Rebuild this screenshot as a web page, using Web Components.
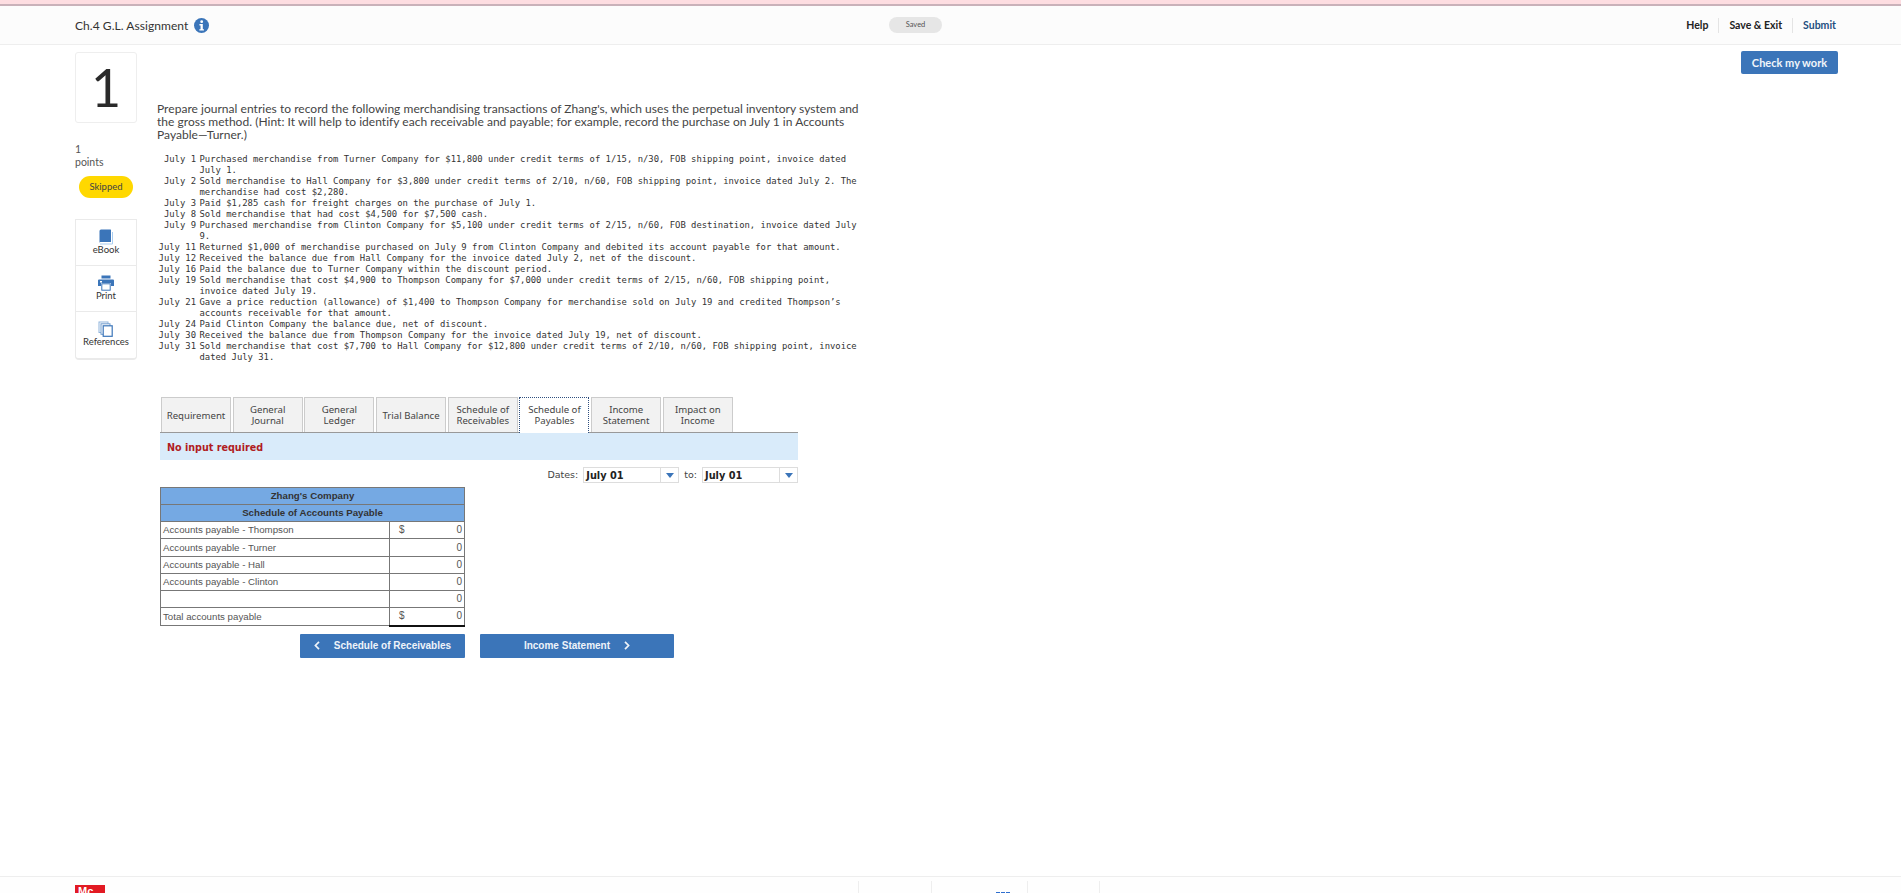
<!DOCTYPE html>
<html lang="en">
<head>
<meta charset="utf-8">
<title>Ch.4 G.L. Assignment</title>
<style>
  html, body { margin: 0; padding: 0; background: #fff; }
  body {
    height: 893px;
    overflow: hidden;
    display: flex;
    flex-direction: column;
    font-family: "Lato", "Liberation Sans", sans-serif;
    color: #333;
  }
</style>
</head>
<body>
<top-strip></top-strip>
<app-header title-text="Ch.4 G.L. Assignment"></app-header>
<main-area>
  <question-side slot="side"></question-side>
  <question-body slot="body">
    <journal-list></journal-list>
    <tab-bar></tab-bar>
    <notice-bar>No input required</notice-bar>
    <date-row></date-row>
    <payable-table></payable-table>
    <nav-buttons></nav-buttons>
  </question-body>
  <check-button slot="action">Check my work</check-button>
</main-area>
<app-footer></app-footer>

<script>
class TopStrip extends HTMLElement {
  connectedCallback() {
    this.attachShadow({ mode: 'open' });
    this.shadowRoot.innerHTML = `
      <style>
        :host { display: block; flex: none; height: 4px; background: #fddde1; border-bottom: 2px solid #c9b1b9; }
      </style>
    `;
  }
}

class AppHeader extends HTMLElement {
  connectedCallback() {
    this.attachShadow({ mode: 'open' });
    this.shadowRoot.innerHTML = `
      <style>
        :host {
          display: grid;
          grid-template-columns: 814px 53px 1fr;
          align-items: center;
          flex: none;
          height: 38px;
          padding: 0 65px 0 75px;
          background: #fcfcfc;
          border-bottom: 1px solid #eee;
          font-family: "Lato", sans-serif;
        }
        .title { display: flex; align-items: center; gap: 6px; font-size: 12px; letter-spacing: .05px; color: #333; }
        .title svg { display: block; width: 15px; height: 15px; }
        .saved {
          width: 53px; height: 16px; border-radius: 8px;
          background: #e6e6e6; color: #555;
          font-size: 7.5px; line-height: 16px; text-align: center;
        }
        .links { display: flex; justify-content: flex-end; align-items: center; font-size: 10.5px; font-weight: 700; color: #222; }
        .links span { padding: 0 10px; height: 15px; line-height: 15px; border-left: 1px solid #e4e4e4; }
        .links span:first-child { border-left: 0; }
        .links span:last-child { padding-right: 0; color: #1f4f7f; }
      </style>
      <div class="title">
        <span>${this.getAttribute('title-text')}</span>
        <svg viewBox="0 0 16 16">
          <circle cx="8" cy="8" r="8" fill="#3b75b9"/>
          <circle cx="8.2" cy="3.9" r="1.5" fill="#fff"/>
          <path d="M5.8 6.5h3.6v5.4h1.2v1.5H5.7v-1.5h1.3V8H5.8z" fill="#fff"/>
        </svg>
      </div>
      <div class="saved">Saved</div>
      <div class="links"><span>Help</span><span>Save &amp; Exit</span><span>Submit</span></div>
    `;
  }
}

class MainArea extends HTMLElement {
  connectedCallback() {
    this.attachShadow({ mode: 'open' });
    this.shadowRoot.innerHTML = `
      <style>
        :host {
          display: grid;
          grid-template-columns: 62px 1fr auto;
          column-gap: 20px;
          align-items: start;
          flex: 1;
          padding: 0 63px 0 75px;
        }
        ::slotted([slot=action]) { margin-top: 6px; }
      </style>
      <slot name="side"></slot>
      <slot name="body"></slot>
      <slot name="action"></slot>
    `;
  }
}

class QuestionSide extends HTMLElement {
  connectedCallback() {
    this.attachShadow({ mode: 'open' });
    this.shadowRoot.innerHTML = `
      <style>
        :host { display: block; padding-top: 7px; font-family: "Lato", sans-serif; color: #555; }
        .num {
          box-sizing: border-box; height: 71px;
          border: 1px solid #eee; border-radius: 3px;
          font-size: 52px; line-height: 68px; text-align: center; color: #2a2a2a;
        }
        .pts { margin-top: 20px; font-size: 10.5px; line-height: 13px; }
        .pill {
          width: 54px; height: 22px; margin: 7px 0 0 4px; border-radius: 11px;
          background: #ffd800; color: #444; font-size: 9.5px; line-height: 22px; text-align: center;
        }
        .tools {
          box-sizing: border-box; width: 62px; margin-top: 21px;
          border: 1px solid #eaeaea; border-bottom-width: 2px; border-radius: 0 0 4px 4px;
        }
        .tool {
          display: flex; flex-direction: column; align-items: center;
          height: 46px; box-sizing: border-box; padding-top: 9px;
          border-bottom: 1px solid #eaeaea;
          font-size: 9.5px; line-height: 10px; color: #333;
        }
        .tool:last-child { border-bottom: 0; height: 46px; }
        .tool svg { display: block; width: 16px; height: 16px; }
      </style>
      <div class="num">1</div>
      <div class="pts">1<br>points</div>
      <div class="pill">Skipped</div>
      <div class="tools">
        <div class="tool">
          <svg viewBox="0 0 16 16">
            <path d="M2 15h12.5V3" fill="none" stroke="#a9cdf0" stroke-width="1"/>
            <path d="M3 .5h9.5a.5.5 0 0 1 .5.5v12H3a1.2 1.2 0 0 0-1.5 1V2A1.5 1.5 0 0 1 3 .5z" fill="#3b75b9"/>
          </svg>
          eBook
        </div>
        <div class="tool">
          <svg viewBox="0 0 16 16">
            <rect x="3.5" y="0.5" width="9" height="3" fill="#3b75b9"/>
            <path d="M1 4.5h14a1 1 0 0 1 1 1V11h-3V8H3v3H0V5.5a1 1 0 0 1 1-1z" fill="#3b75b9"/>
            <rect x="2" y="6" width="2" height="1.5" fill="#fff"/>
            <rect x="3.8" y="8.8" width="8.4" height="6.4" fill="#fff" stroke="#3b75b9" stroke-width="1"/>
          </svg>
          Print
        </div>
        <div class="tool">
          <svg viewBox="0 0 16 16">
            <rect x="1" y="1" width="9" height="10.5" fill="#fff" stroke="#8fb4dc" stroke-width="1"/>
            <rect x="3" y="2.8" width="9" height="10.5" fill="#fff" stroke="#6f9bcd" stroke-width="1"/>
            <rect x="5.2" y="4.8" width="9" height="10.5" fill="#fff" stroke="#3b75b9" stroke-width="1.2"/>
          </svg>
          References
        </div>
      </div>
    `;
  }
}

class QuestionBody extends HTMLElement {
  connectedCallback() {
    this.attachShadow({ mode: 'open' });
    this.shadowRoot.innerHTML = `
      <style>
        :host { display: block; padding-top: 57px; }
        p {
          margin: 0 0 13px; width: 705px;
          font: 12px/13px "Lato", sans-serif; letter-spacing: .03px; color: #444;
        }
      </style>
      <p>Prepare journal entries to record the following merchandising transactions of Zhang's, which uses the perpetual inventory system and the gross method. (Hint: It will help to identify each receivable and payable; for example, record the purchase on July 1 in Accounts Payable—Turner.)</p>
      <slot></slot>
    `;
  }
}

const JOURNAL = [
  ['July 1', 'Purchased merchandise from Turner Company for $11,800 under credit terms of 1/15, n/30, FOB shipping point, invoice dated July 1.'],
  ['July 2', 'Sold merchandise to Hall Company for $3,800 under credit terms of 2/10, n/60, FOB shipping point, invoice dated July 2. The merchandise had cost $2,280.'],
  ['July 3', 'Paid $1,285 cash for freight charges on the purchase of July 1.'],
  ['July 8', 'Sold merchandise that had cost $4,500 for $7,500 cash.'],
  ['July 9', 'Purchased merchandise from Clinton Company for $5,100 under credit terms of 2/15, n/60, FOB destination, invoice dated July 9.'],
  ['July 11', 'Returned $1,000 of merchandise purchased on July 9 from Clinton Company and debited its account payable for that amount.'],
  ['July 12', 'Received the balance due from Hall Company for the invoice dated July 2, net of the discount.'],
  ['July 16', 'Paid the balance due to Turner Company within the discount period.'],
  ['July 19', 'Sold merchandise that cost $4,900 to Thompson Company for $7,000 under credit terms of 2/15, n/60, FOB shipping point, invoice dated July 19.'],
  ['July 21', 'Gave a price reduction (allowance) of $1,400 to Thompson Company for merchandise sold on July 19 and credited Thompson’s accounts receivable for that amount.'],
  ['July 24', 'Paid Clinton Company the balance due, net of discount.'],
  ['July 30', 'Received the balance due from Thompson Company for the invoice dated July 19, net of discount.'],
  ['July 31', 'Sold merchandise that cost $7,700 to Hall Company for $12,800 under credit terms of 2/10, n/60, FOB shipping point, invoice dated July 31.']
];

class JournalList extends HTMLElement {
  connectedCallback() {
    this.attachShadow({ mode: 'open' });
    const rows = JOURNAL.map(r => `<div class="d">${r[0]}</div><div class="t">${r[1]}</div>`).join('');
    this.shadowRoot.innerHTML = `
      <style>
        :host {
          display: grid;
          grid-template-columns: 38px 665px;
          column-gap: 3.5px;
          padding-left: 1px;
          font: 8.9px/11px "DejaVu Sans Mono", "Liberation Mono", monospace;
          color: #333;
        }
        .d { text-align: right; white-space: pre; }
      </style>
      ${rows}
    `;
  }
}

class TabBar extends HTMLElement {
  connectedCallback() {
    this.attachShadow({ mode: 'open' });
    const tabs = ['Requirement', 'General<br>Journal', 'General<br>Ledger', 'Trial Balance', 'Schedule of<br>Receivables', 'Schedule of<br>Payables', 'Income<br>Statement', 'Impact on<br>Income'];
    this.shadowRoot.innerHTML = `
      <style>
        :host {
          display: grid;
          grid-template-columns: repeat(8, 70px);
          column-gap: 1.7px;
          width: 638px;
          margin: 34px 0 0 3px;
          padding-left: 1px;
          box-sizing: border-box;
          border-bottom: 1px solid #999;
          font: 9.6px/11px "Noto Sans", "Open Sans", sans-serif;
          color: #444;
        }
        div {
          box-sizing: border-box; height: 35px;
          display: flex; align-items: center; justify-content: center; text-align: center;
          background: #f2f2f2; border: 1px solid #ccc; border-bottom: 0;
        }
        .on { background: #fff; border: 1px dotted #2f4f7f; border-bottom: 0; margin-bottom: -1px; height: 36px; padding-bottom: 1px; }
      </style>
      ${tabs.map((t, i) => `<div class="${i === 5 ? 'on' : ''}">${t}</div>`).join('')}
    `;
  }
}

class NoticeBar extends HTMLElement {
  connectedCallback() {
    this.attachShadow({ mode: 'open' });
    this.shadowRoot.innerHTML = `
      <style>
        :host {
          display: block;
          width: 638px; height: 27px;
          margin-left: 3px;
          padding: 1px 0 0 7px;
          box-sizing: border-box;
          background: #d9ebfa;
          color: #b01c22;
          font: bold 9.6px/27px "DejaVu Sans", sans-serif;
        }
      </style>
      <slot></slot>
    `;
  }
}

class DateRow extends HTMLElement {
  connectedCallback() {
    this.attachShadow({ mode: 'open' });
    const sel = `<div class="sel"><b>July 01</b><i><svg viewBox="0 0 8 5"><path d="M0 0h8L4 5z" fill="#3b75b9"/></svg></i></div>`;
    this.shadowRoot.innerHTML = `
      <style>
        :host {
          display: flex; justify-content: flex-end; align-items: center;
          width: 638px; height: 16px;
          margin: 7px 0 0 3px;
          font: 9.5px/16px "DejaVu Sans", sans-serif; color: #444;
        }
        span { margin-right: 5px; }
        .sel {
          box-sizing: border-box; width: 96px; height: 16px;
          display: flex; border: 1px solid #ddd; color: #222;
        }
        .sel + span { margin-left: 5px; }
        b { flex: 1; padding-left: 2px; font-size: 9.8px; line-height: 15px; }
        i { width: 17px; border-left: 1px solid #ddd; display: flex; align-items: center; justify-content: center; }
        svg { width: 8px; height: 5px; display: block; }
      </style>
      <span>Dates:</span>${sel}<span>to:</span>${sel}
    `;
  }
}

class PayableTable extends HTMLElement {
  connectedCallback() {
    this.attachShadow({ mode: 'open' });
    const rows = [
      ['Accounts payable - Thompson', '$', 17],
      ['Accounts payable - Turner', '', 18],
      ['Accounts payable - Hall', '', 17],
      ['Accounts payable - Clinton', '', 17],
      ['', '', 17]
    ];
    this.shadowRoot.innerHTML = `
      <style>
        :host { display: block; width: 305px; margin: 4px 0 0 3px; }
        table {
          width: 305px; table-layout: fixed; border-collapse: collapse;
          font: 9.7px/12px "Liberation Sans", sans-serif; color: #555;
        }
        td, th { height: 17px; padding: 0 2px; box-sizing: border-box; border: 1px solid #777; }
        th { background: #75a9e3; color: #333; font-weight: bold; text-align: center; }
        .amt { display: flex; justify-content: space-between; padding: 0 0 0 7px; font-size: 10px; }
        tr.total td { height: 18px; }
        tr.total td:last-child { border-top: 1px solid #111; border-bottom: 2px solid #111; }
        .c2 { width: 75px; }
      </style>
      <table>
        <colgroup><col><col class="c2"></colgroup>
        <tr><th colspan="2">Zhang's Company</th></tr>
        <tr><th colspan="2">Schedule of Accounts Payable</th></tr>
        ${rows.map(r => `<tr style="height:${r[2]}px"><td style="height:${r[2]}px">${r[0]}</td><td><div class="amt"><span>${r[1]}</span><span>0</span></div></td></tr>`).join('')}
        <tr class="total"><td>Total accounts payable</td><td><div class="amt"><span>$</span><span>0</span></div></td></tr>
      </table>
    `;
  }
}

class NavButtons extends HTMLElement {
  connectedCallback() {
    this.attachShadow({ mode: 'open' });
    this.shadowRoot.innerHTML = `
      <style>
        :host { display: flex; gap: 15px; margin: 7px 0 0 143px; }
        div {
          box-sizing: border-box; height: 24px; border-radius: 1px;
          display: flex; align-items: center; justify-content: center; gap: 14px;
          background: #3b75b9; color: #eef3f9;
          font: bold 10px/24px "Liberation Sans", sans-serif;
        }
        .prev { width: 165px; }
        .next { width: 194px; }
        svg { width: 6px; height: 9px; display: block; }
      </style>
      <div class="prev"><svg viewBox="0 0 6 9"><path d="M5 .8 1.4 4.5 5 8.2" fill="none" stroke="#eef3f9" stroke-width="1.7"/></svg><span>Schedule of Receivables</span></div>
      <div class="next"><span>Income Statement</span><svg viewBox="0 0 6 9"><path d="M1 .8 4.6 4.5 1 8.2" fill="none" stroke="#eef3f9" stroke-width="1.7"/></svg></div>
    `;
  }
}

class CheckButton extends HTMLElement {
  connectedCallback() {
    this.attachShadow({ mode: 'open' });
    this.shadowRoot.innerHTML = `
      <style>
        :host {
          display: block; width: 97px; height: 23px; border-radius: 2px;
          background: #3b75b9; color: #f1f5fa; text-align: center;
          font: bold 11px/23px "Lato", sans-serif;
        }
      </style>
      <slot></slot>
    `;
  }
}

class AppFooter extends HTMLElement {
  connectedCallback() {
    this.attachShadow({ mode: 'open' });
    this.shadowRoot.innerHTML = `
      <style>
        :host {
          display: flex; align-items: flex-start; flex: none;
          padding: 4px 0 0 75px; box-sizing: border-box; height: 17px;
          background: #fefefe; border-top: 1px solid #eee; overflow: hidden;
        }
        .logo {
          width: 30px; height: 30px; margin-top: 4px; background: #e21a23; color: #fff;
          font: bold 11px/12px "Liberation Sans", sans-serif; padding-left: 3px; box-sizing: border-box;
        }
        .cells { display: flex; margin-left: 753px; height: 20px; }
        .cells div { box-sizing: border-box; border-left: 1px solid #eee; height: 20px; }
        .apps { padding: 11px 0 0 64px; }
        .apps i {
          display: block; width: 14px; height: 1px;
          background: repeating-linear-gradient(90deg, #2f6fcf 0 4px, #fff 4px 5px);
        }
      </style>
      <div class="logo">Mc</div>
      <div class="cells">
        <div style="width:73px"></div>
        <div class="apps" style="width:96px"><i></i></div>
        <div style="width:72px"></div>
        <div style="width:1px"></div>
      </div>
    `;
  }
}

customElements.define('top-strip', TopStrip);
customElements.define('app-header', AppHeader);
customElements.define('main-area', MainArea);
customElements.define('question-side', QuestionSide);
customElements.define('question-body', QuestionBody);
customElements.define('journal-list', JournalList);
customElements.define('tab-bar', TabBar);
customElements.define('notice-bar', NoticeBar);
customElements.define('date-row', DateRow);
customElements.define('payable-table', PayableTable);
customElements.define('nav-buttons', NavButtons);
customElements.define('check-button', CheckButton);
customElements.define('app-footer', AppFooter);
</script>
</body>
</html>
